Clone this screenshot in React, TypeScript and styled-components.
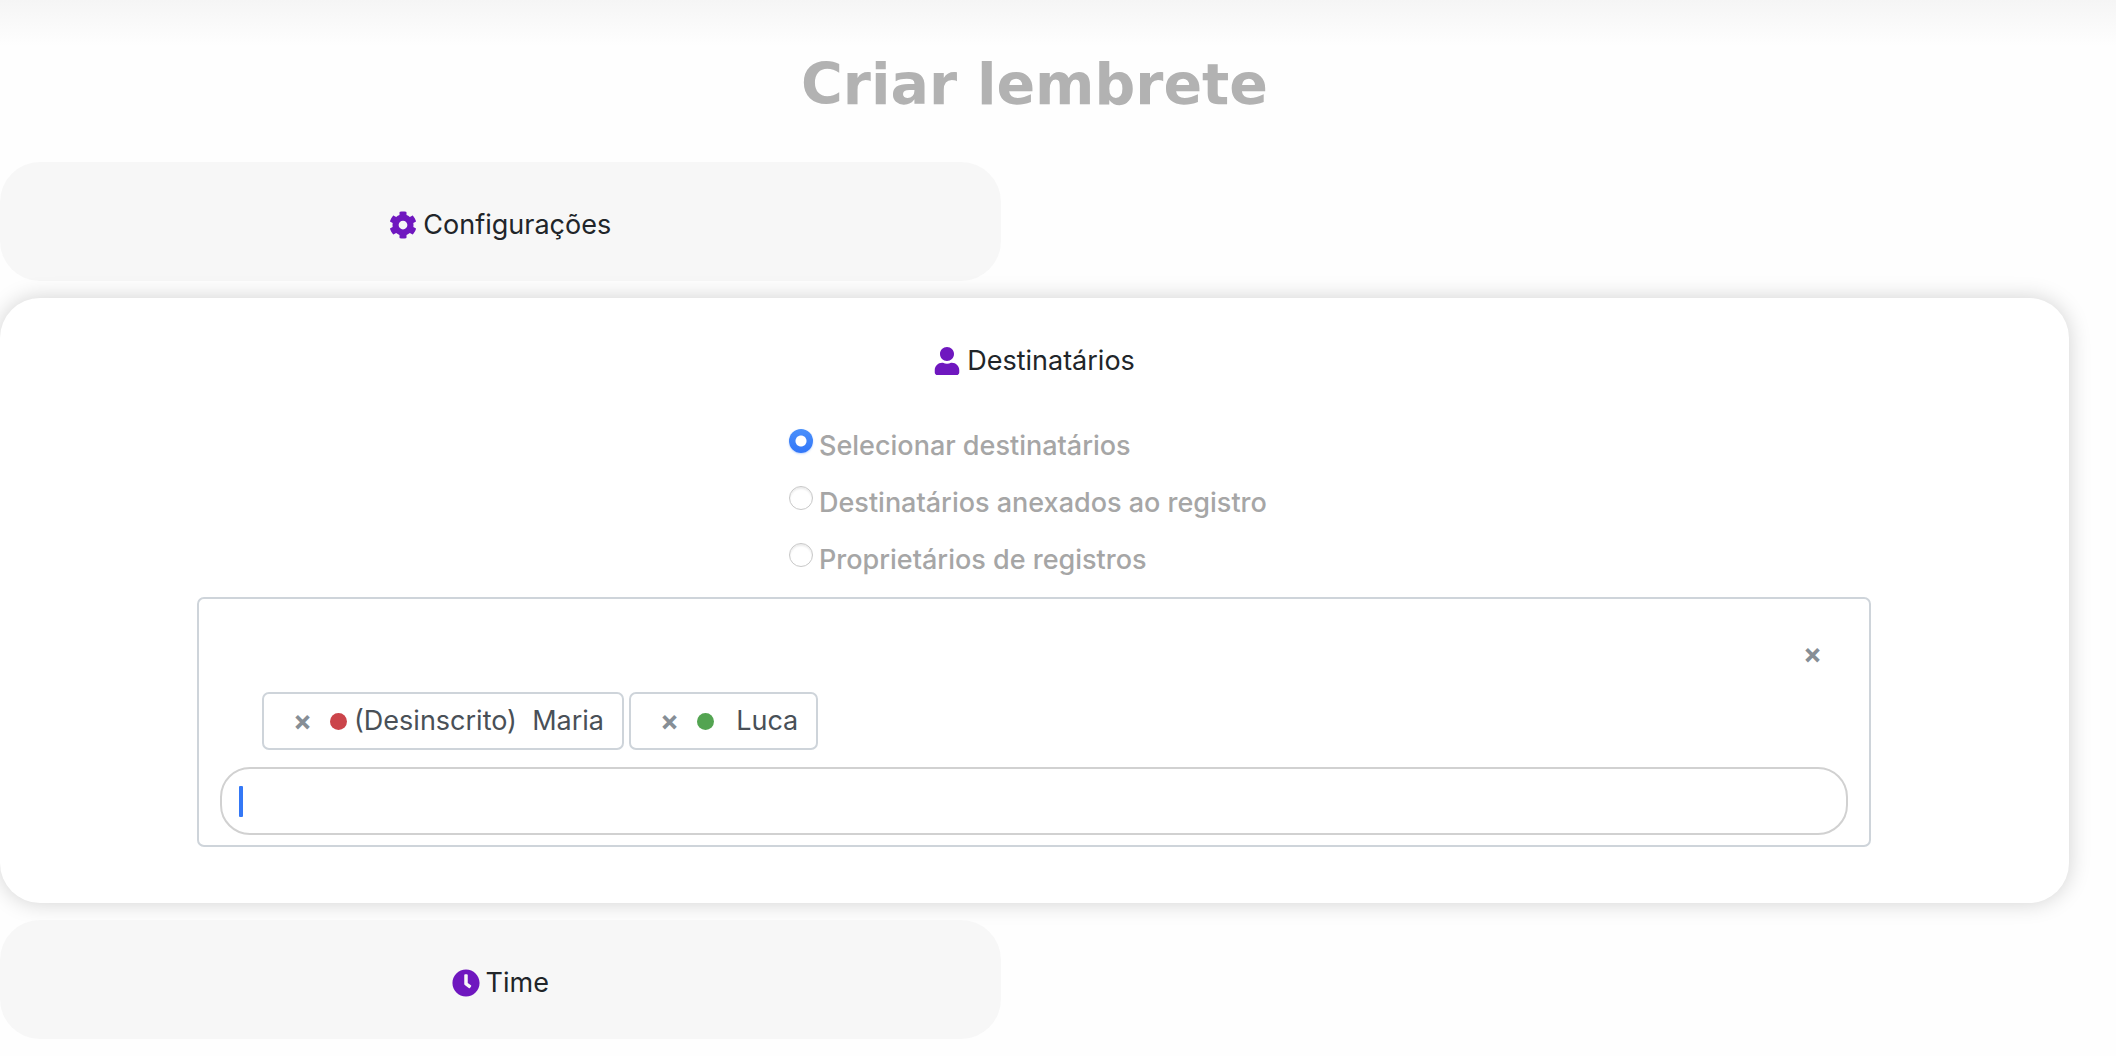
import React, { useState } from "react";
import styled, { createGlobalStyle } from "styled-components";
import { FaCog, FaUser, FaClock } from "react-icons/fa";

const GlobalStyle = createGlobalStyle`
  *, *::before, *::after { box-sizing: border-box; }
  body {
    margin: 0;
    background: #fefefe;
    color: #212529;
    font-family: Inter, "Liberation Sans", sans-serif;
    font-size: 27px;
    line-height: 42px;
  }
`;

const Page = styled.main`
  padding: 44px 47px 18px 0;
  background: linear-gradient(#f5f5f5, #fefefe 46px);
`;

const Title = styled.h1`
  margin: 0 0 38px;
  color: #b2b2b2;
  font-family: "DejaVu Sans", sans-serif;
  font-size: 57px;
  font-weight: 700;
  line-height: 80px;
  text-align: center;
`;

const Steps = styled.div`
  display: flex;
  flex-direction: column;
  gap: 17px;
`;

const CollapsedStep = styled.button`
  display: flex;
  align-items: center;
  justify-content: center;
  gap: 6px;
  width: calc(50% - 34px);
  padding: 42px 24px 35px;
  border: 0;
  border-radius: 40px;
  background: #f7f7f7;
  color: inherit;
  font: inherit;
  cursor: pointer;

  svg { color: #6f17bf; font-size: 28px; }
`;

const OpenStep = styled.section`
  display: flex;
  flex-direction: column;
  align-items: center;
  padding: 42px 198px 56px 197px;
  border-radius: 40px;
  background: #fff;
  box-shadow: 0 0 22px rgba(0, 0, 0, 0.18);
`;

const StepTitle = styled.h2`
  display: flex;
  align-items: center;
  gap: 6px;
  margin: 0 0 43px;
  font-size: 27px;
  font-weight: 400;

  svg { color: #6f17bf; font-size: 28px; }
`;

const Options = styled.fieldset`
  display: flex;
  flex-direction: column;
  gap: 15px;
  width: 490px;
  margin: 0 0 16px;
  padding: 0;
  border: 0;
`;

const Option = styled.label`
  display: flex;
  align-items: flex-start;
  gap: 6px;
  color: #a6a6a6;
  font-weight: 500;
`;

const Radio = styled.input`
  appearance: none;
  flex: none;
  width: 24px;
  height: 24px;
  margin: 4px 0 0;
  border: 1px solid #c8c8c8;
  border-radius: 50%;
  background: #fff;
  box-shadow: inset 0 2px 2px rgba(0, 0, 0, 0.08);

  &:checked {
    border: 0;
    background: radial-gradient(circle, #fff 5px, transparent 6px),
      linear-gradient(#4a90fb, #3276f8);
    box-shadow: 0 1px 2px rgba(50, 118, 248, 0.3);
  }
`;

const Picker = styled.div`
  display: flex;
  flex-direction: column;
  width: 100%;
  padding: 34px 21px 10px;
  border: 2px solid #ced4da;
  border-radius: 7px;
`;

const Cross = styled.button`
  padding: 0;
  border: 0;
  background: none;
  color: #868e96;
  font: 700 28px/42px Inter, sans-serif;
  cursor: pointer;
`;

const ClearRow = styled.div`
  display: flex;
  justify-content: flex-end;
  padding: 0 26px 0 0;
`;

const Chips = styled.ul`
  display: flex;
  flex-wrap: wrap;
  gap: 5px;
  margin: 17px 0;
  padding: 0 42px;
  list-style: none;
`;

const Chip = styled.li`
  display: flex;
  align-items: center;
  height: 58px;
  padding: 0 18px 0 29px;
  border: 2px solid #ced4da;
  border-radius: 7px;
  color: #495057;
  white-space: pre;
`;

const Dot = styled.span<{ $color: string }>`
  width: 17px;
  height: 17px;
  margin: 0 7px 0 18px;
  border-radius: 50%;
  background: ${(p) => p.$color};
`;

const SearchBox = styled.label`
  display: flex;
  align-items: center;
  height: 68px;
  padding: 0 17px;
  border: 2px solid #d1d1d1;
  border-radius: 30px;
`;

const Caret = styled.span`
  width: 4px;
  height: 31px;
  border-radius: 1px;
  background: #3478f6;
`;

const SearchInput = styled.input`
  flex: 1;
  min-width: 0;
  padding: 0;
  border: 0;
  outline: 0;
  background: transparent;
  color: inherit;
  font: inherit;
  caret-color: #3478f6;
`;

const options = [
  "Selecionar destinatários",
  "Destinatários anexados ao registro",
  "Proprietários de registros",
];

const recipients = [
  { text: "(Desinscrito)  Maria", color: "#cb444a" },
  { text: "  Luca", color: "#53a451" },
];

export default function App() {
  const [selected, setSelected] = useState(0);
  return (
    <Page>
      <GlobalStyle />
      <Title>Criar lembrete</Title>
      <Steps>
        <CollapsedStep type="button"><FaCog />Configurações</CollapsedStep>
        <OpenStep>
          <StepTitle><FaUser />Destinatários</StepTitle>
          <Options>
            {options.map((label, i) => (
              <Option key={label}>
                <Radio
                  type="radio"
                  name="recipients"
                  checked={selected === i}
                  onChange={() => setSelected(i)}
                />
                {label}
              </Option>
            ))}
          </Options>
          <Picker>
            <ClearRow><Cross type="button">×</Cross></ClearRow>
            <Chips>
              {recipients.map(({ text, color }) => (
                <Chip key={text}>
                  <Cross type="button">×</Cross>
                  <Dot $color={color} />
                  {text}
                </Chip>
              ))}
            </Chips>
            <SearchBox>
              <Caret />
              <SearchInput type="search" aria-label="Destinatários" />
            </SearchBox>
          </Picker>
        </OpenStep>
        <CollapsedStep type="button"><FaClock />Time</CollapsedStep>
      </Steps>
    </Page>
  );
}
